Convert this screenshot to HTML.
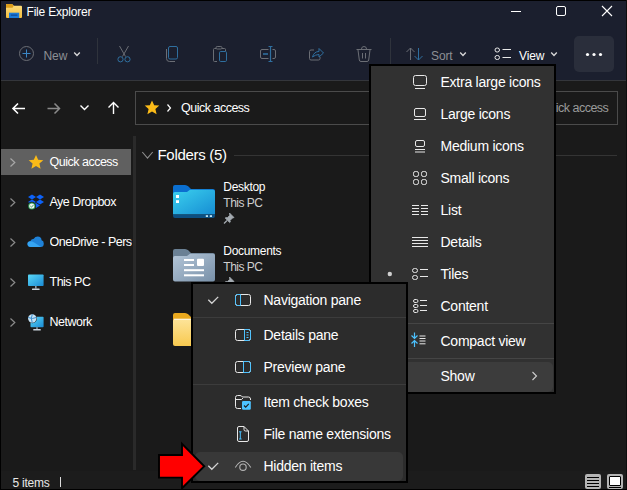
<!DOCTYPE html>
<html><head><meta charset="utf-8">
<style>
*{margin:0;padding:0;box-sizing:border-box}
html,body{width:627px;height:490px;overflow:hidden;background:#1b1b1b}
body{position:relative;font-family:"Liberation Sans",sans-serif;color:#fff}
.a{position:absolute}
.t{position:absolute;white-space:nowrap;line-height:1}
svg{position:absolute;overflow:visible}
svg.pg{left:0;top:0}
</style></head><body>
<div class="a" style="left:0px;top:0px;width:627px;height:490px;background:#1a1a1a;"></div>
<div class="a" style="left:1px;top:1px;width:625px;height:79px;background:#1b1f2e;"></div>
<div class="a" style="left:0px;top:80px;width:627px;height:1px;background:#34363b;"></div>
<div class="a" style="left:1px;top:471px;width:625px;height:18px;background:#1c1c1c;"></div>
<div class="a" style="left:0px;top:0px;width:627px;height:1px;background:#000;"></div>
<div class="a" style="left:0px;top:0px;width:1px;height:490px;background:#000;"></div>
<div class="a" style="left:626px;top:0px;width:1px;height:490px;background:#0d0d0d;"></div>
<div class="a" style="left:0px;top:489px;width:627px;height:1px;background:#000;"></div>
<svg class="pg" width="627" height="490" viewBox="0 0 627 490">
<defs><linearGradient id="tf" x1="0" y1="0" x2="0" y2="1"><stop offset="0" stop-color="#fde083"/><stop offset="1" stop-color="#f3bd3c"/></linearGradient></defs>
<path d="M6 5 Q6 4 7 4 H12 L13.8 5.8 H21 Q22 5.8 22 6.8 V17 Q22 18 21 18 H7 Q6 18 6 17 Z" fill="url(#tf)"/>
<path d="M6 5 Q6 4 7 4 H12 L13.8 5.8 L12.5 7.8 H6 Z" fill="#dc9d1a"/>
<rect x="9" y="12.7" width="10.2" height="5.3" fill="#1a7ad8"/>
<rect x="10.8" y="14.6" width="6.6" height="1" fill="#0b3e88"/>
<path d="M511 11.5 H521" stroke="#fff" stroke-width="1"/>
<rect x="556.5" y="6.5" width="9" height="9" rx="1.5" fill="none" stroke="#fff" stroke-width="1"/>
<path d="M602 6 L612 16 M612 6 L602 16" stroke="#fff" stroke-width="1.1"/>
</svg>
<div class="t" style="left:26.5px;top:6px;font-size:12px;letter-spacing:-0.2px;color:#fff;">File Explorer</div>
<svg class="pg" width="627" height="490" viewBox="0 0 627 490">
<circle cx="26.5" cy="53.5" r="7" fill="none" stroke="#6b6e75" stroke-width="1"/>
<path d="M26.5 49.5 V57.5 M22.5 53.5 H30.5" stroke="#3b86c4" stroke-width="1"/>
<path d="M74.2 52.6 L77 55.4 L79.8 52.6" fill="none" stroke="#d8d8d8" stroke-width="1.4"/>
<path d="M97.5 38 V64" stroke="#2f333c" stroke-width="1"/>
<path d="M119.5 46 L125.5 56.5 M128.5 46 L122.5 56.5" stroke="#6b6e75" stroke-width="1"/>
<circle cx="120.5" cy="59.3" r="2.6" fill="none" stroke="#2f6f9f" stroke-width="1"/>
<circle cx="127.5" cy="59.3" r="2.6" fill="none" stroke="#2f6f9f" stroke-width="1"/>
<path d="M166.5 49 V58.5 Q166.5 61.5 169.5 61.5 H175" fill="none" stroke="#6b6e75" stroke-width="1"/>
<rect x="168.5" y="46.5" width="9" height="12.5" rx="1.5" fill="none" stroke="#2f6f9f" stroke-width="1"/>
<path d="M216 48.5 H214.5 Q213.5 48.5 213.5 49.5 V60.5 Q213.5 61.5 214.5 61.5 H217 M222 48.5 H224.5 Q225.5 48.5 225.5 49.5 V51" fill="none" stroke="#6b6e75" stroke-width="1"/>
<rect x="216" y="46.5" width="6" height="2.5" rx="1.2" fill="none" stroke="#6b6e75" stroke-width="1"/>
<rect x="219.5" y="51.5" width="7" height="10" rx="1.2" fill="none" stroke="#2f6f9f" stroke-width="1"/>
<path d="M268.5 49.5 H262 Q260.5 49.5 260.5 51 V57 Q260.5 58.5 262 58.5 H268.5 M272.5 49.5 H274 Q275.5 49.5 275.5 51 V57 Q275.5 58.5 274 58.5 H272.5" fill="none" stroke="#6b6e75" stroke-width="1"/>
<path d="M270.5 46.5 V61.5 M268.5 46.5 H272.5 M268.5 61.5 H272.5" stroke="#2f6f9f" stroke-width="1.2"/><path d="M263 54 H268" stroke="#2f6f9f" stroke-width="1.6"/>
<path d="M314 50 H311 Q309.5 50 309.5 51.5 V58.5 Q309.5 60 311 60 H318.5 Q320 60 320 58.5 V57" fill="none" stroke="#6b6e75" stroke-width="1"/>
<path d="M312.5 57 Q314 51.5 319 51.5 V48.5 L323.5 53 L319 57 V54.5 Q315.5 54.5 312.5 57 Z" fill="none" stroke="#2f6f9f" stroke-width="1"/>
<path d="M356.5 49.5 H371.5 M361.5 49 Q361.5 46.5 364 46.5 Q366.5 46.5 366.5 49 M358 50 L359.3 60 Q359.5 61.5 361 61.5 H367 Q368.5 61.5 368.7 60 L370 50 M362.5 53 V58.5 M365.5 53 V58.5" fill="none" stroke="#6b6e75" stroke-width="1"/>
<path d="M390.5 38 V64" stroke="#2f333c" stroke-width="1"/>
<path d="M410.5 60 V48 M406.5 52 L410.5 48 L414.5 52" fill="none" stroke="#6b6e75" stroke-width="1"/>
<path d="M418.5 48 V60 M414.5 56 L418.5 60 L422.5 56" fill="none" stroke="#2f6f9f" stroke-width="1"/>
<path d="M460.2 52.6 L463 55.4 L465.8 52.6" fill="none" stroke="#d8d8d8" stroke-width="1.4"/>
<rect x="495" y="48" width="4.5" height="4" rx="2" fill="none" stroke="#e8e8e8" stroke-width="1"/>
<rect x="495" y="55.5" width="4.5" height="4" rx="2" fill="none" stroke="#e8e8e8" stroke-width="1"/>
<path d="M502.5 49.5 H511 M502.5 57.5 H511" stroke="#e8e8e8" stroke-width="1"/>
<path d="M551.2 52.6 L554 55.4 L556.8 52.6" fill="none" stroke="#d8d8d8" stroke-width="1.4"/>
</svg>
<div class="t" style="left:43.5px;top:50px;font-size:12px;letter-spacing:-0.1px;color:#8d8f94;">New</div>
<div class="t" style="left:431px;top:50px;font-size:12px;letter-spacing:-0.1px;color:#8d8f94;">Sort</div>
<div class="t" style="left:519px;top:50px;font-size:12px;letter-spacing:-0.1px;color:#fff;">View</div>
<div class="a" style="left:574px;top:36px;width:40px;height:36px;background:#2a2e3b;border-radius:5px"></div>
<svg class="pg" width="627" height="490" viewBox="0 0 627 490"><circle cx="587.5" cy="54.5" r="1.6" fill="#fff"/><circle cx="594" cy="54.5" r="1.6" fill="#fff"/><circle cx="600.5" cy="54.5" r="1.6" fill="#fff"/></svg>
<svg class="pg" width="627" height="490" viewBox="0 0 627 490">
<path d="M25 108.5 H13 M18 103.5 L13 108.5 L18 113.5" fill="none" stroke="#fff" stroke-width="1.6"/>
<path d="M47.5 108.5 H59.5 M54.5 103.5 L59.5 108.5 L54.5 113.5" fill="none" stroke="#8a8a8a" stroke-width="1.5"/>
<path d="M80.5 105.5 L84.5 109.5 L88.5 105.5" fill="none" stroke="#fff" stroke-width="1.4"/>
<path d="M113.5 114 V102.5 M108.5 107.5 L113.5 102.5 L118.5 107.5" fill="none" stroke="#fff" stroke-width="1.4"/>
<rect x="135.5" y="91.5" width="330" height="33" fill="none" stroke="#4b4b4b" stroke-width="1"/>
<rect x="470.5" y="91.5" width="147" height="33" fill="none" stroke="#4b4b4b" stroke-width="1"/>
<path d="M152 100.5 L154.2 105.2 L159.3 105.6 L155.4 109 L156.6 114.2 L152 111.4 L147.4 114.2 L148.6 109 L144.7 105.6 L149.8 105.2 Z" fill="#fbbb18"/>
<path d="M167.5 104.5 L170.5 108 L167.5 111.5" fill="none" stroke="#fff" stroke-width="1.2"/>
</svg>
<div class="t" style="left:181px;top:102px;font-size:12.5px;letter-spacing:-0.5px;color:#fff;">Quick access</div>
<div class="t" style="left:540px;top:102px;font-size:12.5px;letter-spacing:-0.5px;color:#9a9a9a;">Quick access</div>
<div class="a" style="left:133px;top:136px;width:3px;height:334px;background:#2a2a2a;"></div>
<div class="a" style="left:1px;top:149px;width:130px;height:26px;background:#606060;"></div>
<svg class="pg" width="627" height="490" viewBox="0 0 627 490"><path d="M10.5 158.5 L14.8 162.5 L10.5 166.5" fill="none" stroke="#a8a8a8" stroke-width="1.2"/><path d="M10.5 198.5 L14.8 202.5 L10.5 206.5" fill="none" stroke="#8c8c8c" stroke-width="1.2"/><path d="M10.5 238.5 L14.8 242.5 L10.5 246.5" fill="none" stroke="#8c8c8c" stroke-width="1.2"/><path d="M10.5 278.5 L14.8 282.5 L10.5 286.5" fill="none" stroke="#8c8c8c" stroke-width="1.2"/><path d="M10.5 318.5 L14.8 322.5 L10.5 326.5" fill="none" stroke="#8c8c8c" stroke-width="1.2"/>
<path d="M36 155 L38.2 159.8 L43.3 160.2 L39.4 163.6 L40.6 168.8 L36 166 L31.4 168.8 L32.6 163.6 L28.7 160.2 L33.8 159.8 Z" fill="#fbbb18"/>
<path d="M32 194.5 L36 197 L32 199.5 L28 197 Z M40 194.5 L44 197 L40 199.5 L36 197 Z M32 199.5 L36 202 L32 204.5 L28 202 Z M40 199.5 L44 202 L40 204.5 L36 202 Z M32 205.5 L36 203 L40 205.5 L36 208 Z" fill="#0d62f8"/>
<circle cx="31.8" cy="206" r="4.3" fill="#1a1a1a"/>
<circle cx="31.8" cy="206" r="3.6" fill="#2e9e57"/>
<circle cx="31.8" cy="206" r="2.6" fill="#f4f4f4"/>
<path d="M30.3 206 L31.5 207.2 L33.5 204.9" fill="none" stroke="#2e9e57" stroke-width="0.9"/>
<path d="M31 247 Q27.5 247 27.5 244 Q27.5 241.3 30.3 241.2 Q31 238.7 33.8 238.7 Q35 236.5 37.8 236.5 Q41.3 236.6 41.6 240.2 Q43.8 240.6 43.8 243.5 Q43.8 247 40.8 247 Z" fill="#1f82d8"/>
<path d="M31 247 Q27.5 247 27.5 244 Q27.5 241.3 30.5 241.3 Q33 241.5 35 243 L41 247 Z" fill="#35a4f2"/>
<defs><linearGradient id="pc" x1="0" y1="0" x2="1" y2="1"><stop offset="0" stop-color="#5ad8f7"/><stop offset="1" stop-color="#1a8ad4"/></linearGradient></defs>
<rect x="28" y="274.5" width="15.6" height="11.5" rx="0.8" fill="url(#pc)"/>
<rect x="35" y="286" width="1.6" height="2.5" fill="#8d9aa6"/>
<rect x="32" y="288.5" width="7.6" height="1.5" rx="0.5" fill="#c9d3dc"/>
<rect x="30.5" y="316.7" width="13.1" height="10.5" rx="0.8" fill="url(#pc)"/>
<rect x="36.2" y="327.2" width="1.6" height="2" fill="#8d9aa6"/>
<rect x="33.2" y="329" width="7.6" height="1.4" rx="0.5" fill="#c9d3dc"/>
<circle cx="32.3" cy="318.5" r="4.7" fill="#1a1a1a"/>
<circle cx="32.3" cy="318.5" r="4.2" fill="#c6e2f4"/>
<path d="M28.3 317.5 Q32.3 319.5 36.3 317.5 M32.3 314.3 Q30.3 318.5 32.3 322.7" fill="none" stroke="#3b8fd0" stroke-width="1"/>
</svg>
<div class="t" style="left:49.5px;top:156px;font-size:12.5px;letter-spacing:-0.5px;color:#fff;">Quick access</div>
<div class="t" style="left:49.5px;top:196px;font-size:12.5px;letter-spacing:-0.5px;color:#fff;">Aye Dropbox</div>
<div class="t" style="left:49.5px;top:236px;font-size:12.5px;letter-spacing:-0.5px;color:#fff;width:82px;overflow:hidden">OneDrive - Personal</div>
<div class="t" style="left:49.5px;top:276px;font-size:12.5px;letter-spacing:-0.5px;color:#fff;">This PC</div>
<div class="t" style="left:49.5px;top:316px;font-size:12.5px;letter-spacing:-0.5px;color:#fff;">Network</div>
<svg class="pg" width="627" height="490" viewBox="0 0 627 490">
<path d="M142.3 152 L147.5 158.2 L152.7 152" fill="none" stroke="#8c8c8c" stroke-width="1.1"/>
<path d="M234 155.5 H617" stroke="#343434" stroke-width="1"/>
<defs>
<linearGradient id="dk" x1="0" y1="0" x2="1" y2="1"><stop offset="0" stop-color="#3bd0ee"/><stop offset="1" stop-color="#168dd3"/></linearGradient>
<linearGradient id="dc" x1="0" y1="0" x2="1" y2="1"><stop offset="0" stop-color="#b4c6d8"/><stop offset="1" stop-color="#7890a8"/></linearGradient>
<linearGradient id="yf" x1="0" y1="0" x2="0" y2="1"><stop offset="0" stop-color="#fde49a"/><stop offset="1" stop-color="#f8c94f"/></linearGradient>
</defs>
<path d="M173 187 Q173 185 175 185 H185 Q187 185 188.5 186.5 L191 189 H213 Q215 189 215 191 V200 H173 Z" fill="#0b6fd0"/>
<path d="M173 194 Q173 192 175 192 H187 L190 189.8 H213 Q215 189.8 215 191.8 V214.5 H173 Z" fill="url(#dk)"/>
<path d="M173 214.5 H215 V216 Q215 218 213 218 H175 Q173 218 173 216 Z" fill="#0c4f82"/>
<rect x="176" y="195" width="3" height="3" fill="#fff"/><rect x="176" y="200.2" width="3" height="2.8" fill="#fff"/>
<rect x="205.8" y="215.2" width="2.2" height="1.8" fill="#bfe4f3"/><rect x="209.8" y="215.2" width="2.2" height="1.8" fill="#bfe4f3"/>
<path d="M229.5 213 L234 217.5 L232.5 218 L230 220.5 L230.3 222 L229.7 222.6 L225.2 218.1 L225.8 217.5 L227.3 217.8 L229.8 215.3 Z" fill="#a4abb1" stroke="#a4abb1" stroke-width="0.8"/>
<path d="M227 220.5 L224 223.5" stroke="#a4abb1" stroke-width="1.2"/>

<path d="M173 251 Q173 249 175 249 H185 Q187 249 188.5 250.5 L191 253 H213 Q215 253 215 255 V264 H173 Z" fill="#6a8094"/>
<path d="M173 258 Q173 256 175 256 H187 L190 253.8 H213 Q215 253.8 215 255.8 V279.5 Q215 281.5 213 281.5 H175 Q173 281.5 173 279.5 Z" fill="url(#dc)"/>
<rect x="184" y="259" width="10" height="2" fill="#fff"/><rect x="184" y="264" width="10" height="2" fill="#fff"/>
<rect x="184" y="269.2" width="20" height="2" fill="#fff"/><rect x="184" y="274.3" width="20" height="2" fill="#fff"/>
<rect x="197" y="258.8" width="7" height="7.2" rx="1" fill="#fff"/>
<path d="M229.5 277 L234 281.5 L232.5 282 L230 284.5 L230.3 286 L229.7 286.6 L225.2 282.1 L225.8 281.5 L227.3 281.8 L229.8 279.3 Z" fill="#a4abb1" stroke="#a4abb1" stroke-width="0.8"/>

<path d="M173 315 Q173 313 175 313 H185 Q187 313 188.5 314.5 L191 317 H213 V328 H173 Z" fill="#eaa91e"/>
<path d="M173 321 Q173 319 175 319 H200 V346 H175 Q173 346 173 344 Z" fill="url(#yf)"/>
<path d="M174 319.3 H200" stroke="#fff7df" stroke-width="1.2"/>
</svg>
<div class="t" style="left:223.3px;top:181px;font-size:12px;letter-spacing:-0.3px;color:#fff;">Desktop</div>
<div class="t" style="left:223.3px;top:197px;font-size:12px;letter-spacing:-0.5px;color:#cfcfcf;">This PC</div>
<div class="t" style="left:223.3px;top:245px;font-size:12px;letter-spacing:-0.3px;color:#fff;">Documents</div>
<div class="t" style="left:223.3px;top:261px;font-size:12px;letter-spacing:-0.5px;color:#cfcfcf;">This PC</div>
<div class="t" style="left:157.5px;top:147px;font-size:15px;letter-spacing:-0.3px;color:#fff;">Folders (5)</div>
<div class="t" style="left:12.4px;top:477px;font-size:12px;letter-spacing:-0.2px;color:#e8e8e8;">5 items</div>
<div class="a" style="left:60px;top:477px;width:1px;height:10px;background:#dcdcdc;"></div>
<div class="a" style="left:585px;top:474px;width:16px;height:15px;background:#b4b4b4;border-radius:2px"></div>
<div class="a" style="left:587px;top:476.5px;width:12px;height:1.2px;background:#000;"></div>
<div class="a" style="left:587px;top:479.5px;width:12px;height:1.2px;background:#000;"></div>
<div class="a" style="left:587px;top:482.5px;width:12px;height:1.2px;background:#000;"></div>
<div class="a" style="left:587px;top:485.5px;width:12px;height:1.2px;background:#000;"></div>
<div class="a" style="left:607px;top:474px;width:16px;height:15px;background:#b4b4b4;border-radius:2px"></div>
<div class="a" style="left:609px;top:476px;width:12px;height:10px;background:#fff;border:1.3px solid #000;border-radius:1px"></div>
<div class="a" style="left:609px;top:487px;width:12px;height:1px;background:#000;"></div>
<div class="a" style="left:369px;top:64px;width:187px;height:330px;background:#000;"></div>
<div class="a" style="left:371px;top:66px;width:183px;height:326px;background:#313131;"></div>
<div class="a" style="left:371px;top:323px;width:183px;height:1px;background:#454545;"></div>
<div class="a" style="left:371px;top:358px;width:183px;height:1px;background:#454545;"></div>
<div class="a" style="left:376px;top:362px;width:176.5px;height:29.5px;background:#3c3c3c;border-radius:5px"></div>
<svg class="pg" width="627" height="490" viewBox="0 0 627 490">
<rect x="413.5" y="75.5" width="13" height="10" rx="2" fill="none" stroke="#e8e8e8" stroke-width="1"/><path d="M415 88.5 H425" fill="none" stroke="#e8e8e8" stroke-width="1"/>
<rect x="414.5" y="108.5" width="11" height="8" rx="1.5" fill="none" stroke="#e8e8e8" stroke-width="1"/><path d="M414 119.5 H426" fill="none" stroke="#e8e8e8" stroke-width="1"/>
<rect x="415.5" y="140.5" width="9" height="6" rx="1.5" fill="none" stroke="#e8e8e8" stroke-width="1"/><path d="M415 149.5 H425 M415 152 H425" fill="none" stroke="#e8e8e8" stroke-width="1"/>
<rect x="413.5" y="171.5" width="5" height="5" rx="1.8" fill="none" stroke="#e8e8e8" stroke-width="1"/><rect x="421.5" y="171.5" width="5" height="5" rx="1.8" fill="none" stroke="#e8e8e8" stroke-width="1"/>
<rect x="413.5" y="179.5" width="5" height="5" rx="1.8" fill="none" stroke="#e8e8e8" stroke-width="1"/><rect x="421.5" y="179.5" width="5" height="5" rx="1.8" fill="none" stroke="#e8e8e8" stroke-width="1"/>
<path d="M412 205.5 H419 M412 208.5 H419 M412 211.5 H419 M412 214.5 H419 M421 205.5 H428 M421 208.5 H428 M421 211.5 H428 M421 214.5 H428" fill="none" stroke="#e8e8e8" stroke-width="1"/>
<path d="M412 237.5 H428 M412 240.5 H428 M412 243.5 H428 M412 246.5 H428" fill="none" stroke="#e8e8e8" stroke-width="1"/>
<circle cx="389.8" cy="274" r="2.2" fill="#cfcfcf"/>
<rect x="412.5" y="268.5" width="5" height="4" rx="2" fill="none" stroke="#e8e8e8" stroke-width="1"/><rect x="412.5" y="275.5" width="5" height="4" rx="2" fill="none" stroke="#e8e8e8" stroke-width="1"/>
<path d="M420 269.5 H428 M420 276.5 H428" fill="none" stroke="#e8e8e8" stroke-width="1"/>
<rect x="413.5" y="299.5" width="4.5" height="3" rx="1.5" fill="none" stroke="#e8e8e8" stroke-width="1"/><rect x="413.5" y="304.5" width="4.5" height="3" rx="1.5" fill="none" stroke="#e8e8e8" stroke-width="1"/><rect x="413.5" y="309.5" width="4.5" height="3" rx="1.5" fill="none" stroke="#e8e8e8" stroke-width="1"/>
<path d="M420 300.5 H427 M420 305.5 H427 M420 310.5 H427" fill="none" stroke="#e8e8e8" stroke-width="1"/>
<path d="M414.5 332.5 V338.5 M411.5 335.5 L414.5 338.5 L417.5 335.5 M414.5 347 V340.5 M411.5 343.5 L414.5 340.5 L417.5 343.5" fill="none" stroke="#4cc2ff" stroke-width="1.2"/>
<path d="M419.5 336 H425.5 M419.5 338.5 H425.5 M419.5 341 H425.5 M419.5 343.8 H425.5" fill="none" stroke="#e8e8e8" stroke-width="1"/>
<path d="M532.5 372 L536.5 376 L532.5 380" fill="none" stroke="#cfcfcf" stroke-width="1.1"/>
</svg>
<div class="t" style="left:440.5px;top:75px;font-size:14px;letter-spacing:-0.25px;color:#fff;">Extra large icons</div>
<div class="t" style="left:440.5px;top:107px;font-size:14px;letter-spacing:-0.25px;color:#fff;">Large icons</div>
<div class="t" style="left:440.5px;top:139px;font-size:14px;letter-spacing:-0.25px;color:#fff;">Medium icons</div>
<div class="t" style="left:440.5px;top:171px;font-size:14px;letter-spacing:-0.25px;color:#fff;">Small icons</div>
<div class="t" style="left:440.5px;top:203px;font-size:14px;letter-spacing:-0.25px;color:#fff;">List</div>
<div class="t" style="left:440.5px;top:235px;font-size:14px;letter-spacing:-0.25px;color:#fff;">Details</div>
<div class="t" style="left:440.5px;top:267px;font-size:14px;letter-spacing:-0.25px;color:#fff;">Tiles</div>
<div class="t" style="left:440.5px;top:299px;font-size:14px;letter-spacing:-0.25px;color:#fff;">Content</div>
<div class="t" style="left:440.5px;top:334px;font-size:14px;letter-spacing:-0.25px;color:#fff;">Compact view</div>
<div class="t" style="left:440.5px;top:369px;font-size:14px;letter-spacing:-0.25px;color:#fff;">Show</div>
<div class="a" style="left:191px;top:282px;width:217px;height:201px;background:#000;"></div>
<div class="a" style="left:193px;top:284px;width:213px;height:197px;background:#2c2c2c;"></div>
<div class="a" style="left:193px;top:317px;width:213px;height:1px;background:#3c3c3c;"></div>
<div class="a" style="left:193px;top:384px;width:213px;height:1px;background:#3c3c3c;"></div>
<div class="a" style="left:195px;top:451.5px;width:208px;height:29.5px;background:#383838;border-radius:5px"></div>
<svg class="pg" width="627" height="490" viewBox="0 0 627 490">
<path d="M208.3 299.8 L211.8 303.3 L218.2 296.9" fill="none" stroke="#d4d4d4" stroke-width="1.3"/>
<rect x="235.5" y="294.5" width="15" height="11" rx="2" fill="none" stroke="#e8e8e8" stroke-width="1"/>
<path d="M240.5 294.5 H237.5 Q235.5 294.5 235.5 296.5 V303.5 Q235.5 305.5 237.5 305.5 H240.5 Z" fill="none" stroke="#4cc2ff" stroke-width="1"/>
<rect x="235.5" y="329.5" width="15" height="11" rx="2" fill="none" stroke="#e8e8e8" stroke-width="1"/>
<path d="M244.5 329.5 H248.5 Q250.5 329.5 250.5 331.5 V338.5 Q250.5 340.5 248.5 340.5 H244.5 Z M246.5 332.5 H248.5 M246.5 335 H248.5 M246.5 337.5 H248.5" fill="none" stroke="#4cc2ff" stroke-width="1"/>
<rect x="235.5" y="361.5" width="15" height="11" rx="2" fill="none" stroke="#e8e8e8" stroke-width="1"/>
<path d="M243.5 361.5 H248.5 Q250.5 361.5 250.5 363.5 V370.5 Q250.5 372.5 248.5 372.5 H243.5 Z" fill="none" stroke="#4cc2ff" stroke-width="1"/>
<path d="M241 408.5 H237.5 Q235.5 408.5 235.5 406.5 V397.5 Q235.5 395.5 237.5 395.5 H240 Q241.5 395.5 242.5 397 H248.5 Q250.5 397 250.5 399 V400" fill="none" stroke="#e8e8e8" stroke-width="1"/>
<path d="M235.5 399.5 H241.5 L243 398" fill="none" stroke="#e8e8e8" stroke-width="1"/>
<rect x="242" y="401" width="8.8" height="8.8" rx="1.2" fill="#4cc2ff"/>
<path d="M244 405.5 L245.7 407.2 L248.8 403.8" fill="none" stroke="#1e1e1e" stroke-width="1.1"/>
<path d="M239 426.5 H244 L248.5 431 V440 Q248.5 441.5 247 441.5 H239 Q237.5 441.5 237.5 440 V428 Q237.5 426.5 239 426.5 Z M244 426.5 V429.5 Q244 431 245.5 431 H248.5" fill="none" stroke="#e8e8e8" stroke-width="1"/>
<path d="M240.3 431.8 V439 M239 431.8 H241.6 M239 439 H241.6" fill="none" stroke="#4cc2ff" stroke-width="1"/>
<path d="M208.3 465.8 L211.8 469.3 L218.2 462.9" fill="none" stroke="#d4d4d4" stroke-width="1.3"/>
<path d="M235.3 467.5 Q243 455 250.8 467.5" fill="none" stroke="#b4b4b4" stroke-width="1.1"/>
<circle cx="243" cy="467.2" r="3.2" fill="none" stroke="#b4b4b4" stroke-width="1.1"/>
</svg>
<div class="t" style="left:263.5px;top:293px;font-size:14px;letter-spacing:-0.25px;color:#fff;">Navigation pane</div>
<div class="t" style="left:263.5px;top:328px;font-size:14px;letter-spacing:-0.25px;color:#fff;">Details pane</div>
<div class="t" style="left:263.5px;top:360px;font-size:14px;letter-spacing:-0.25px;color:#fff;">Preview pane</div>
<div class="t" style="left:263.5px;top:395px;font-size:14px;letter-spacing:-0.25px;color:#fff;">Item check boxes</div>
<div class="t" style="left:263.5px;top:427px;font-size:14px;letter-spacing:-0.25px;color:#fff;">File name extensions</div>
<div class="t" style="left:263.5px;top:459px;font-size:14px;letter-spacing:-0.25px;color:#fff;">Hidden items</div>
<svg class="pg" width="627" height="490" viewBox="0 0 627 490"><path d="M159 455 H182 V443.8 L204.3 466.3 L182 488.3 V477.6 H159 Z" fill="#ff0000" stroke="#000" stroke-width="1.9" stroke-linejoin="miter"/></svg>
</body></html>
